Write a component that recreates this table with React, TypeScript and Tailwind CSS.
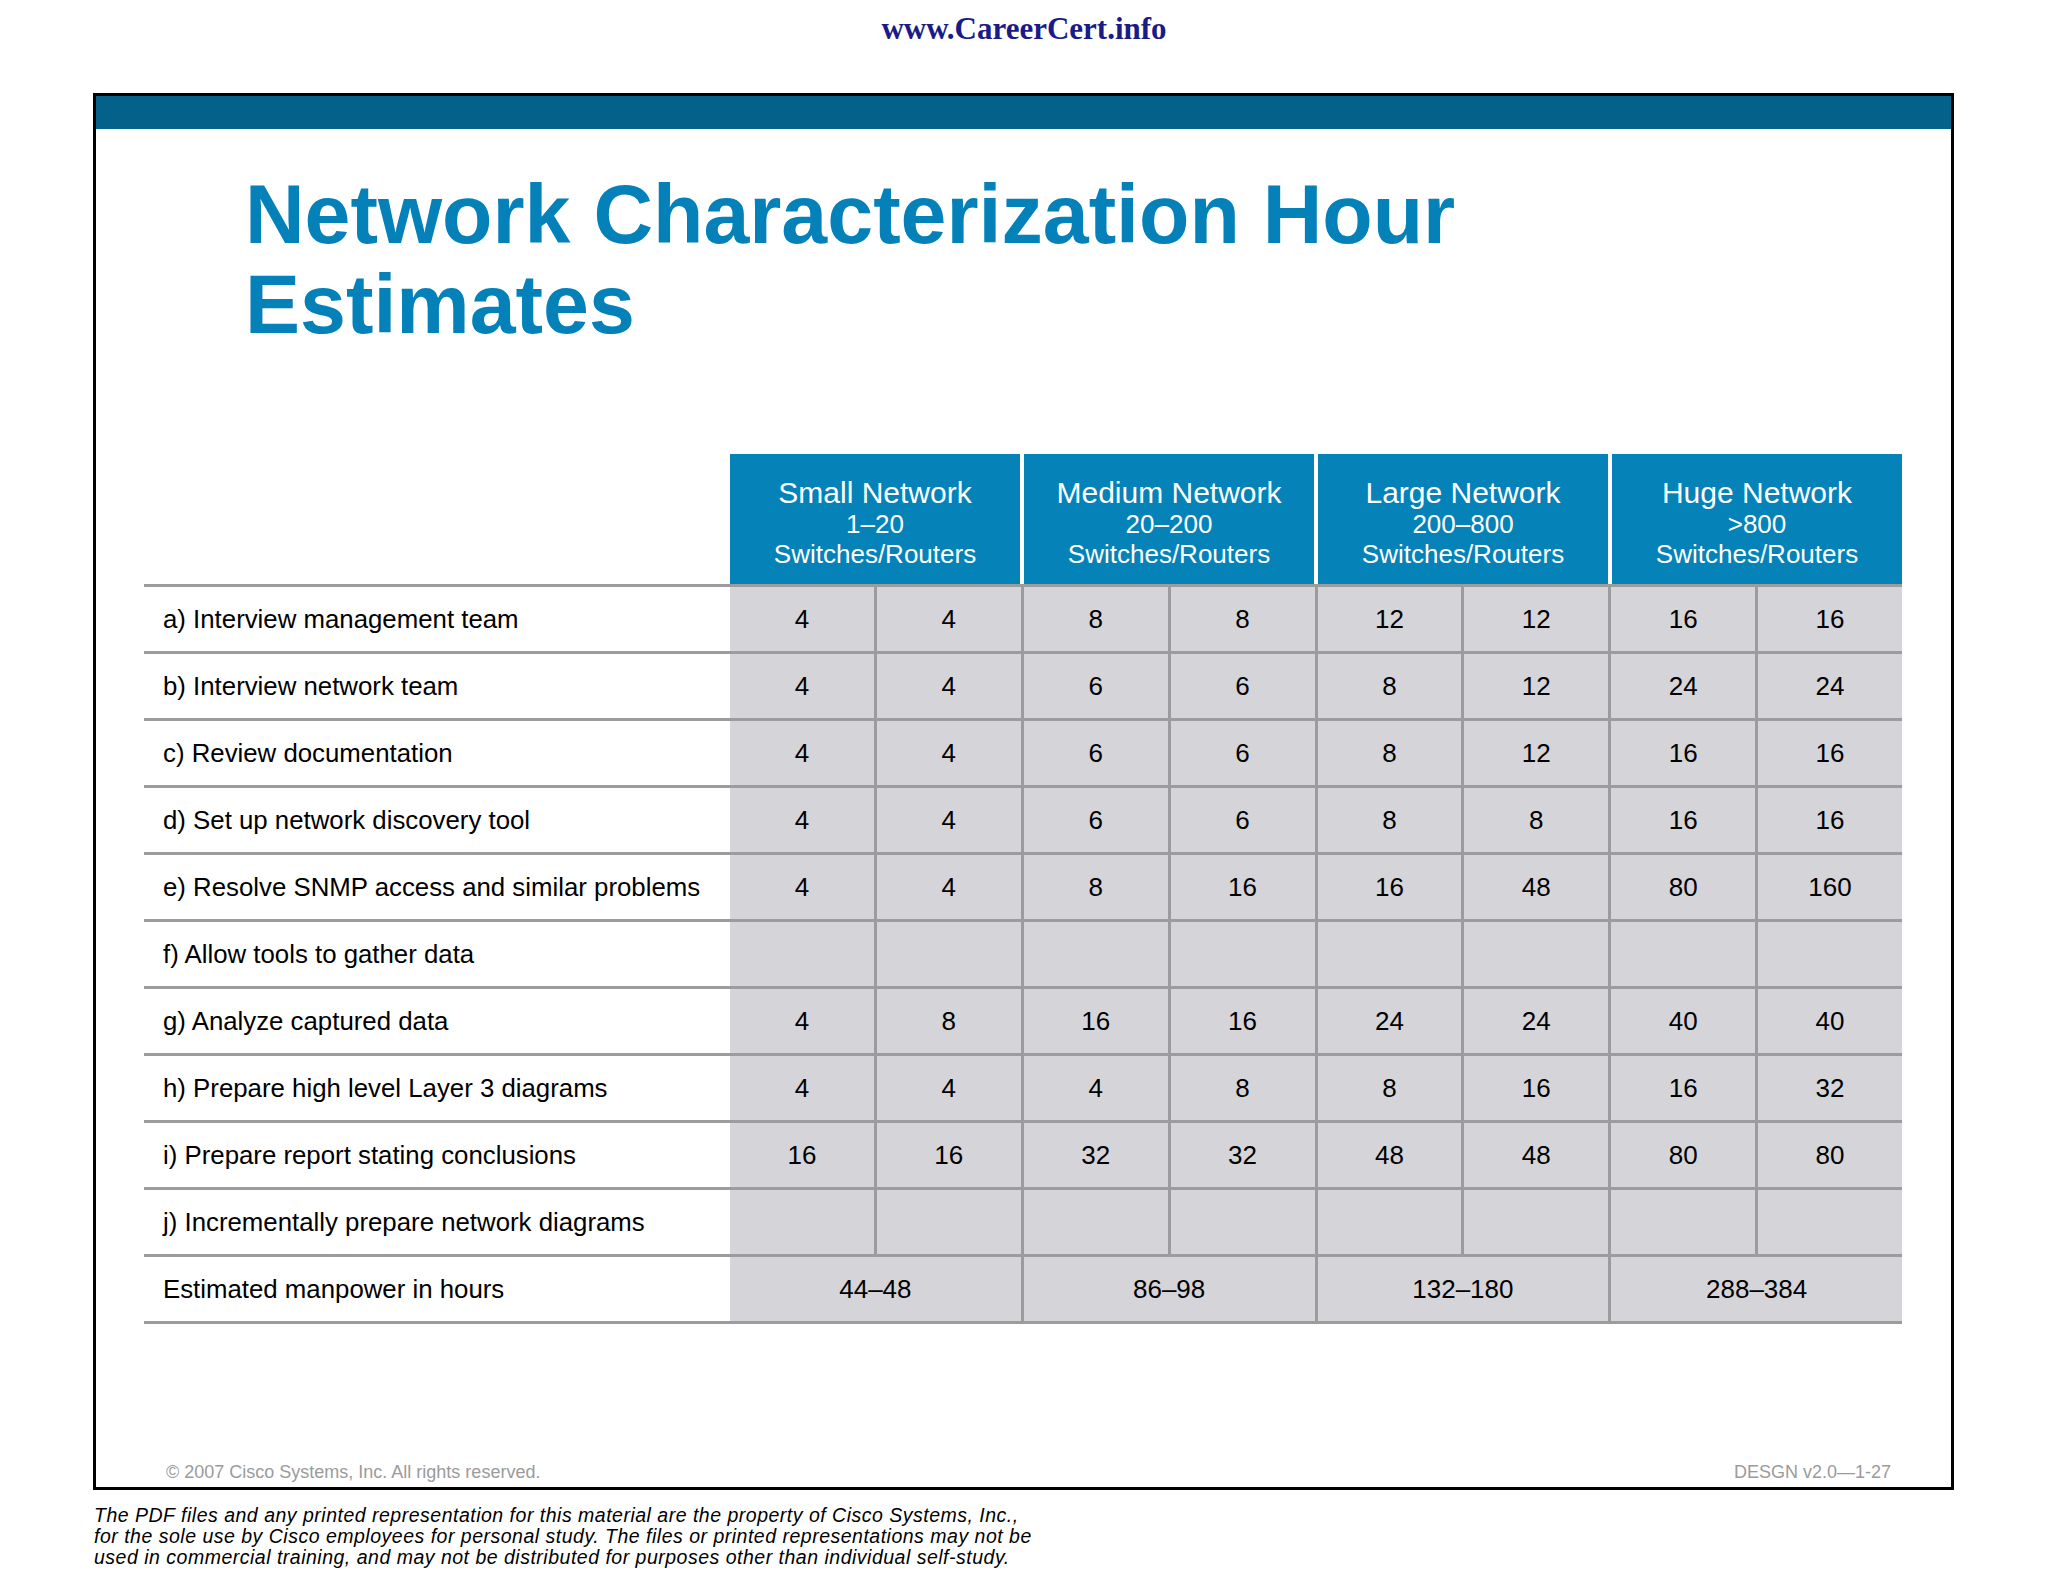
const sans = { fontFamily: '"Liberation Sans", Arial, Helvetica, sans-serif' };

type Group = { title: string; range: string };

const groups: Group[] = [
  { title: "Small Network", range: "1–20" },
  { title: "Medium Network", range: "20–200" },
  { title: "Large Network", range: "200–800" },
  { title: "Huge Network", range: ">800" },
];

const rows: { label: string; values: string[] }[] = [
  { label: "a) Interview management team", values: ["4", "4", "8", "8", "12", "12", "16", "16"] },
  { label: "b) Interview network team", values: ["4", "4", "6", "6", "8", "12", "24", "24"] },
  { label: "c) Review documentation", values: ["4", "4", "6", "6", "8", "12", "16", "16"] },
  { label: "d) Set up network discovery tool", values: ["4", "4", "6", "6", "8", "8", "16", "16"] },
  { label: "e) Resolve SNMP access and similar problems", values: ["4", "4", "8", "16", "16", "48", "80", "160"] },
  { label: "f) Allow tools to gather data", values: ["", "", "", "", "", "", "", ""] },
  { label: "g) Analyze captured data", values: ["4", "8", "16", "16", "24", "24", "40", "40"] },
  { label: "h) Prepare high level Layer 3 diagrams", values: ["4", "4", "4", "8", "8", "16", "16", "32"] },
  { label: "i) Prepare report stating conclusions", values: ["16", "16", "32", "32", "48", "48", "80", "80"] },
  { label: "j) Incrementally prepare network diagrams", values: ["", "", "", "", "", "", "", ""] },
];

const totals = ["44–48", "86–98", "132–180", "288–384"];

function HeaderRow() {
  return (
    <div className="flex h-[130px]">
      <div className="w-[586px] shrink-0" />
      <div className="grid w-[1172px] grid-cols-4 gap-x-[4px]">
        {groups.map((g) => (
          <div key={g.title} className="flex flex-col items-center bg-[#0582b8] pt-[22px] text-white">
            <div className="text-[30px] leading-[33px]">{g.title}</div>
            <div className="text-[26px] leading-[30px]">{g.range}</div>
            <div className="text-[26px] leading-[30px]">Switches/Routers</div>
          </div>
        ))}
      </div>
    </div>
  );
}

function DataRow({ label, values }: { label: string; values: string[] }) {
  return (
    <div className="flex h-[67px] border-t-[3px] border-[#9c9c9e]">
      <div className="flex w-[586px] shrink-0 items-center pl-[19px] text-[25.8px] text-black">{label}</div>
      <div className="grid w-[1172px] grid-cols-8 gap-x-[3px] bg-[#9c9c9e]">
        {values.map((v, i) => (
          <div key={i} className="flex items-center justify-center bg-[#d5d4d8] text-[26px] text-black">
            {v}
          </div>
        ))}
      </div>
    </div>
  );
}

function TotalRow() {
  return (
    <div className="flex h-[70px] border-y-[3px] border-[#9c9c9e]">
      <div className="flex w-[586px] shrink-0 items-center pl-[19px] text-[25.8px] text-black">
        Estimated manpower in hours
      </div>
      <div className="grid w-[1172px] grid-cols-4 gap-x-[3px] bg-[#9c9c9e]">
        {totals.map((t) => (
          <div key={t} className="flex items-center justify-center bg-[#d5d4d8] text-[26px] text-black">
            {t}
          </div>
        ))}
      </div>
    </div>
  );
}

export default function App() {
  return (
    <div className="h-[1582px] w-[2048px] bg-white" style={sans}>
      <div className="h-[93px] pt-[12px] text-center">
        <span
          className="text-[31px] font-bold leading-[34px] text-[#1b1b87]"
          style={{ fontFamily: '"Liberation Serif", "Times New Roman", serif' }}
        >
          www.CareerCert.info
        </span>
      </div>

      <div className="ml-[93px] flex h-[1397px] w-[1861px] flex-col border-[3px] border-black">
        <div className="h-[33px] bg-[#04618a]" />

        <h1 className="mt-[40px] pl-[149px] text-[82.5px] font-bold leading-[90px] text-[#0581b9]">
          Network Characterization Hour
          <br />
          Estimates
        </h1>

        <div className="ml-[48px] mt-[105px] w-[1758px]">
          <HeaderRow />
          {rows.map((r) => (
            <DataRow key={r.label} label={r.label} values={r.values} />
          ))}
          <TotalRow />
        </div>

        <div className="mt-auto flex justify-between pb-[4px] pl-[70px] pr-[60px] text-[18px] leading-[22px] text-[#9b9b9b]">
          <span>© 2007 Cisco Systems, Inc. All rights reserved.</span>
          <span>DESGN v2.0—1-27</span>
        </div>
      </div>

      <div className="ml-[94px] mt-[15px] text-[19.5px] italic leading-[21px] tracking-[0.5px] text-black">
        The PDF files and any printed representation for this material are the property of Cisco Systems, Inc.,
        <br />
        for the sole use by Cisco employees for personal study. The files or printed representations may not be
        <br />
        used in commercial training, and may not be distributed for purposes other than individual self-study.
      </div>
    </div>
  );
}
